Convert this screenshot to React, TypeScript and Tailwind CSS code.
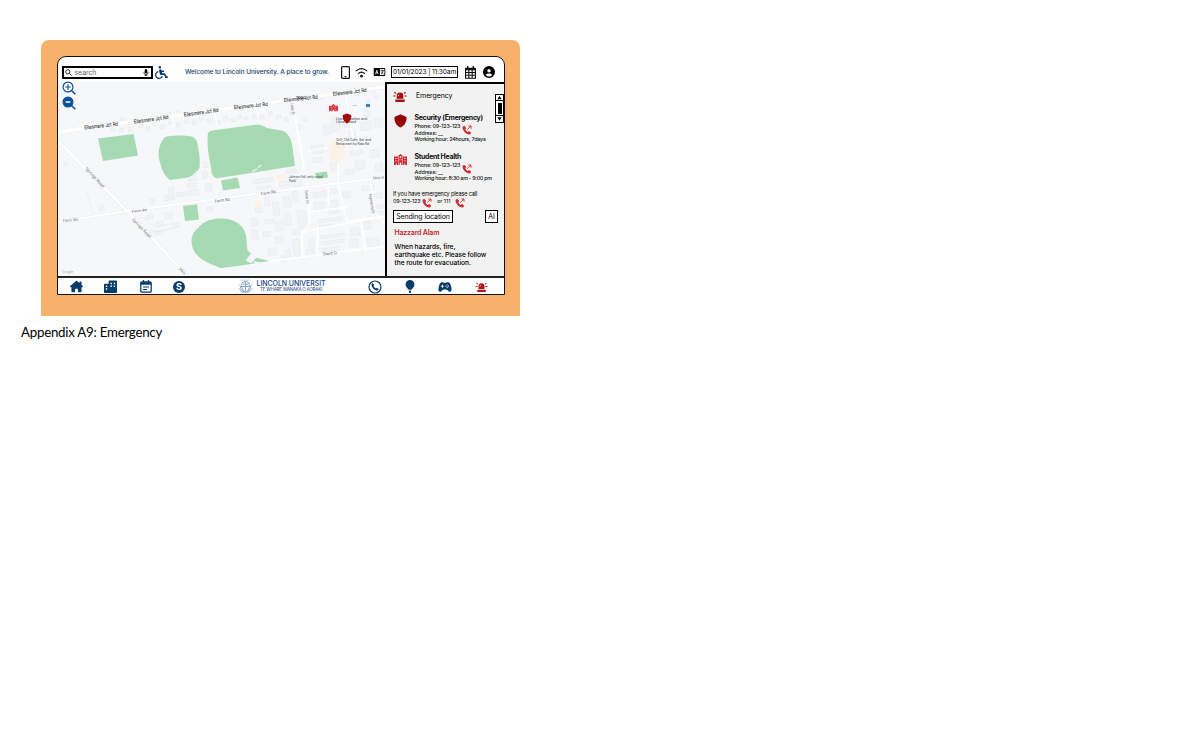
import type { ReactNode } from "react";
import { FaWheelchair, FaShield, FaHouseChimney, FaCircleUser } from "react-icons/fa6";
import { IoGameController } from "react-icons/io5";

function Siren({ className }: { className: string }) {
  return (
    <svg viewBox="0 0 24 20" className={className} fill="currentColor">
      <path d="M6 14V8.500a6 6 0 0 1 12 0V14z" />
      <path d="M3.500 15.500h17V20h-17z" />
      <path d="M11 6c-1.500.7-2.200 1.800-2.200 3.500" stroke="#fff" strokeWidth="1.200" fill="none" />
      <path d="M1.500 2l3.500 2.500M22.500 2l-3.500 2.500M0 9h4M24 9h-4" stroke="currentColor" strokeWidth="1.900" />
    </svg>
  );
}

function Hospital({ className }: { className: string }) {
  return (
    <svg viewBox="0 0 26 22" className={className} fill="currentColor">
      <path fillRule="evenodd" d="M9 3l4-3 4 3v19h-2.500v-5h-3v5H9zM12.300 4v1.500h-1.500V7h1.500v1.500h1.500V7h1.500V5.500h-1.500V4zM11 10.500v2h1.500v-2zm3 0v2h1.500v-2z" />
      <path fillRule="evenodd" d="M0 5h8v17H5.500v-3h-2v3H0zm2 3v2h1.500V8zm3 0v2h1.500V8zm-3 5v2h1.500v-2zm3 0v2h1.500v-2z" />
      <path fillRule="evenodd" d="M18 5h8v17h-3.500v-3h-2v3H18zm2 3v2h1.500V8zm3 0v2h1.500V8zm-3 5v2h1.500v-2zm3 0v2h1.500v-2z" />
    </svg>
  );
}

function CallOut() {
  return (
    <svg viewBox="0 0 20 20" className="size-[10px] shrink-0 text-[#d22a30]">
      <path fill="currentColor" d="M4.500 1.500 1 3.500C.5 11 8 19.500 16 19l2.500-3.500-4.500-3.500-2.500 1.800C9 12.500 7.500 10.500 6.800 8.300L8.500 6z" />
      <path d="M10.500 9 18 2M12.500 2H18v5.500" fill="none" stroke="currentColor" strokeWidth="1.800" />
    </svg>
  );
}

function Magnifier({ minus }: { minus?: boolean }) {
  return (
    <svg viewBox="0 0 14 14" className="block size-[14px]">
      <circle cx="6" cy="6" r="4.900" fill={minus ? "#0f529c" : "#fff"} stroke="#0f529c" strokeWidth="1.200" />
      <path d="M9.500 9.500 13.300 13.300" stroke="#0f529c" strokeWidth="1.600" />
      {minus ? (
        <path d="M3.700 6h4.600" stroke="#fff" strokeWidth="1.300" />
      ) : (
        <path d="M3.200 6h5.600M6 3.200v5.600" stroke="#0f529c" strokeWidth="1.200" />
      )}
    </svg>
  );
}

function Label({ x, y, r, w, size = 5, children }: { x: number; y: number; r: number; w: number; size?: number; children: string }) {
  return (
    <text x={x} y={y} fontSize={size} textLength={w} lengthAdjust="spacingAndGlyphs" transform={`rotate(${r} ${x} ${y})`}>
      {children}
    </text>
  );
}

const houses: [number, number][] = [
  [110, 128], [119, 129], [128, 127], [138, 125], [146, 127], [152, 123], [160, 125], [168, 122], [176, 123], [184, 120],
  [192, 121], [199, 118], [207, 119], [216, 121], [223, 117], [230, 119], [237, 115], [244, 117], [252, 115], [260, 116],
  [268, 112], [276, 116], [284, 118], [289, 112], [296, 125], [303, 118], [200, 112], [211, 109], [240, 106], [120, 118],
  [166, 113], [176, 111], [318, 96], [344, 92], [366, 100], [374, 96],
];

const blocks: [number, number, number, number][] = [
  [164, 196, 10, 5], [176, 193, 12, 4], [188, 176, 8, 5], [187, 184, 9, 4], [190, 190, 8, 6], [203, 162, 4, 6], [202, 172, 5, 7],
  [205, 184, 6, 8], [253, 180, 20, 4], [256, 187, 15, 3], [279, 182, 12, 5], [293, 180, 8, 7], [286, 170, 10, 4],
  [264, 198, 5, 8], [272, 202, 6, 14], [283, 197, 7, 11], [292, 192, 5, 10], [255, 208, 7, 5], [251, 219, 6, 7], [265, 220, 9, 4],
  [275, 222, 8, 9], [284, 214, 6, 12], [297, 211, 8, 18], [292, 230, 7, 5], [251, 230, 6, 10], [263, 232, 7, 5], [275, 237, 8, 7],
  [292, 240, 7, 18], [285, 250, 5, 8], [268, 249, 8, 7], [281, 256, 4, 6], [313, 193, 12, 5], [327, 190, 10, 4], [314, 203, 10, 9],
  [328, 201, 9, 13], [342, 192, 8, 7], [318, 220, 24, 3], [318, 226, 16, 3], [321, 236, 23, 3], [321, 242, 23, 3], [321, 249, 19, 3],
  [350, 228, 9, 8], [362, 222, 8, 8], [349, 240, 9, 8], [366, 239, 13, 8], [308, 240, 6, 7], [306, 250, 8, 7], [311, 146, 12, 8],
  [313, 158, 9, 5], [323, 126, 7, 9], [331, 118, 7, 14], [339, 123, 12, 4], [348, 131, 7, 8], [360, 123, 11, 8], [374, 119, 8, 9],
  [363, 108, 6, 9], [350, 151, 12, 5], [355, 161, 9, 9], [370, 150, 9, 8], [375, 164, 7, 8], [345, 170, 9, 5], [330, 163, 6, 8],
  [362, 187, 12, 4], [372, 194, 10, 5], [377, 205, 8, 4], [376, 212, 8, 4], [150, 199, 4, 5], [168, 188, 5, 10], [99, 206, 5, 5],
  [63, 163, 4, 3], [145, 216, 8, 4], [156, 222, 7, 5], [164, 213, 8, 6], [173, 224, 6, 4], [155, 231, 8, 4], [207, 207, 6, 4],
];

function CampusMap() {
  return (
    <svg viewBox="58 82 327 194" className="block h-full w-full bg-[#f6f7f9]" fontFamily="Inter, sans-serif">
      <g fill="#f1f2f4" stroke="#e6e8ea" strokeWidth=".5">
        {houses.map(([x, y], i) => (
          <rect key={i} x={x} y={y} width={i % 3 ? 4 : 5} height={i % 2 ? 3 : 4} transform={`rotate(-8 ${x} ${y})`} />
        ))}
        {blocks.map(([x, y, w, h], i) => (
          <rect key={i} x={x} y={y} width={w} height={h} transform={`rotate(-8 ${x} ${y})`} />
        ))}
      </g>
      <g fill="none" stroke="#e6e8ea" strokeWidth=".6">
        <path d="M139 215l16 12 20-4M140 227l18 5 14-3M86 190l8 27M144 234l35-7" />
      </g>
      <g fill="none" stroke="#e9ebed" strokeLinejoin="round">
        <path d="M58 132 386 86.500" strokeWidth="4.600" />
        <path d="M58 141 127 211 190 279" strokeWidth="3.500" />
        <path d="M58 222 127 211 386 177" strokeWidth="2.800" />
      </g>
      <g fill="none" stroke="#fff" strokeLinejoin="round">
        <path d="M58 132 386 86.500" strokeWidth="3.800" />
        <path d="M58 141 127 211 190 279" strokeWidth="2.500" />
        <path d="M58 222 127 211 386 177" strokeWidth="2" />
        <path d="M292 100 308 190 310 222 302 234 302 256" strokeWidth="1.800" />
        <path d="M345 92 355 150M338 164v19l9 39 36-6M328 187l1 20M310 212l37-5" strokeWidth="1.500" />
        <path d="M370 179l5 33 11 13M302 232l84-16M318 226l-1 29M349 222l12-3 5 34M250 264 386 246" strokeWidth="1.600" />
        <path d="M215 114l2 12M256 108l2 10M173 118v9M308 151l30-5 16-2" strokeWidth="1.200" />
      </g>
      <g fill="#a6dab3">
        <path d="m98 138.500 35.500-4.500 4.500 21.500-35 5.500z" />
        <path d="M165 137c8-2 22-2 28 0 4 2 5 7 5.500 13 1.500 5 1.500 15 1 18-3 5-9 9-14 10l-16 2c-5-5-8-10-9-16-3-8-3-19 4.500-27z" />
        <path d="M208 133q1-2 4-2.500l42-5.500c7-1 9 1 13 3l17 3c5 4 7 8 8 13l3 22-76 12q-5 1-7-4l-4-24q-1-11 0-17z" />
        <path d="m221 180.500 16.500-3 2.500 10.500-17 2.500zM315 173l12-1.500 1 6-11 1.500zM183 206l14-1.500 2 15-14 1.500z" />
        <path d="M198 228c6-8 16-9.500 23-9.500 14 0 23 7 25 17l1.500 15 8 7 14 3.500-28 4.500-21 2.500c-15-6-28-11-29-26 0-6 2-10 6.500-14z" />
      </g>
      <g fill="#fbf2e6">
        <ellipse cx="337" cy="151" rx="9" ry="11" />
        <ellipse cx="281" cy="177" rx="6" ry="3" />
        <ellipse cx="258" cy="204" rx="3" ry="4" />
      </g>
      <path d="m247 260 4-5 4 2.500-4 4.500z" fill="#f3f5f7" stroke="#f3f5f7" strokeWidth="2" strokeLinejoin="round" />
      <path d="M254 262q8 3 16 .5" stroke="#f6f7f9" strokeWidth="2" fill="none" />
      <path d="m252 172 5-3m1-1 3-3" stroke="#e4f0e6" strokeWidth="1.500" fill="none" />
      <g fill="#3c3f43" stroke="#3c3f43" strokeWidth=".12">
        <Label x={84.500} y={129.500} r={-7} w={34}>Ellesmere Jct Rd</Label>
        <Label x={134} y={123.500} r={-8} w={35}>Ellesmere Jct Rd</Label>
        <Label x={184} y={116.500} r={-8} w={35}>Ellesmere Jct Rd</Label>
        <Label x={234} y={109.200} r={-6} w={34}>Ellesmere Jct Rd</Label>
        <Label x={284} y={102} r={-6} w={34}>Ellesmere Jct Rd</Label>
        <Label x={333} y={95.800} r={-7} w={34}>Ellesmere Jct Rd</Label>
        <Label x={296} y={98.500} r={0} w={10} size={3.500}>1000</Label>
      </g>
      <g fill="#65686c">
        <Label x={85} y={169} r={47} w={26} size={4}>Springs Road</Label>
        <Label x={132} y={220} r={46} w={25} size={4}>Springs Road</Label>
        <Label x={63} y={222} r={-4} w={15} size={3.500}>Farm Rd</Label>
        <Label x={132} y={212.500} r={-6} w={15} size={3.500}>Farm Rd</Label>
        <Label x={215} y={202.500} r={-7} w={15} size={3.800}>Farm Rd</Label>
        <Label x={261} y={195} r={-8} w={15} size={3.800}>Farm Rd</Label>
        <Label x={373} y={179.500} r={-4} w={11} size={3.800}>Farm R</Label>
        <Label x={305} y={190} r={84} w={14} size={3.800}>Calder Dr</Label>
        <Label x={290.500} y={103} r={82} w={12} size={3.800}>Calder Dr</Label>
        <Label x={369} y={194} r={81} w={20} size={3.800}>Engineering Dr</Label>
        <Label x={323} y={255.500} r={-5} w={14} size={3.800}>Sheriff St</Label>
        <Label x={179} y={269} r={48} w={8} size={3.500}>Main</Label>
      </g>
      <text x="62" y="273" fontSize="3.300" fill="#a9abad">Google</text>
      <g fill="#393b3e">
        <Label x={336} y={120} r={0} w={31} size={3.600}>Lincoln Station and</Label>
        <Label x={336} y={123} r={0} w={20} size={3.600}>Library Road</Label>
        <Label x={336} y={141.300} r={0} w={35} size={3.600}>Grill, Old Cafe, Bar and</Label>
        <Label x={336} y={145.300} r={0} w={33} size={3.600}>Restaurant by Kaia Rd</Label>
        <Label x={289} y={178} r={0} w={34} size={3.600}>Johnson Hall, early school</Label>
        <Label x={289} y={181.500} r={0} w={7} size={3.600}>Park</Label>
      </g>
      <path d="M366 104h4v3h-4z" fill="#3e7fca" />
      <path d="M353 105h4v1h-4z" fill="#c5d3df" />
      <svg x="329" y="104" width="9" height="7.500" viewBox="0 0 26 22" fill="#dc2730">
        <path d="M9 3l4-3 4 3v19h-2.500v-5h-3v5H9zM0 5h8v17H5.500v-3h-2v3H0zM18 5h8v17h-3.500v-3h-2v3H18z" />
        <path d="M12.500 5h1v5h-1zM2 10h4v1H2zM20 10h4v1h-4z" fill="#fff" />
      </svg>
      <path d="m347 113.500 4.300 1.600c0 4-1 6.500-4.300 8.400-3.300-1.900-4.300-4.400-4.300-8.400z" fill="#a40b0e" />
    </svg>
  );
}

function Contact({ icon, title, hours, titleClass, hoursClass }: { icon: ReactNode; title: string; hours: string; titleClass: string; hoursClass: string }) {
  return (
    <div className="flex h-[39px] pl-[7px]">
      <div className="w-[20.500px] shrink-0">{icon}</div>
      <div className="whitespace-nowrap text-[5.400px] leading-[6.500px] font-medium text-[#111]">
        <div className={`h-[10px] text-[7px] leading-[10px] font-bold ${titleClass}`}>{title}</div>
        <div className="flex">
          <div className="w-[47.500px]">
            <div className="tracking-[-0.200px]">Phone: 09-123-123</div>
            <div className="tracking-[-0.100px]">Address: __</div>
          </div>
          <div className="pt-[2px]"><CallOut /></div>
        </div>
        <div className={hoursClass}>{hours}</div>
      </div>
    </div>
  );
}

function EmergencyPanel() {
  return (
    <aside className="flex w-[119px] shrink-0 border-t-2 border-l-2 border-black bg-[#f2f2f2] text-black">
      <div className="w-[108px] shrink-0">
        <div className="flex h-[29px] items-start pt-[6px] pl-[6px]">
          <Siren className="mt-[1px] h-[11px] w-[14px] text-[#a80f12]" />
          <span className="pl-[9px] text-[7px] leading-[12px] tracking-[-0.100px]">Emergency</span>
        </div>
        <Contact
          icon={<FaShield className="mt-[1px] h-[14px] w-[13px] text-[#980508]" />}
          title="Security (Emergency)"
          titleClass="tracking-[-0.320px]"
          hours="Working hour: 24hours, 7days"
          hoursClass="tracking-[-0.230px]"
        />
        <Contact
          icon={<Hospital className="mt-[2px] h-[11px] w-[13px] text-[#d0262b]" />}
          title="Student Health"
          titleClass="tracking-[-0.320px]"
          hours="Working hour: 8:30 am - 9:00 pm"
          hoursClass="tracking-[-0.280px]"
        />
        <div className="h-[18px] pl-[6px] text-[5.600px] leading-[7px] whitespace-nowrap">
          <div className="tracking-[-0.180px]">If you have emergency please call</div>
          <div className="flex text-[5.400px]">
            <span className="w-[29px] tracking-[-0.200px]">09-123-123</span>
            <CallOut />
            <span className="w-[23px] pl-[5px]">or 111</span>
            <CallOut />
          </div>
        </div>
        <div className="flex h-[18px] w-[111px] items-start justify-between pt-[1px] pl-[6px]">
          <div className="flex h-[13px] w-[60px] items-center justify-center border-[1.500px] border-black bg-white text-[7px] leading-none tracking-[-0.100px] whitespace-nowrap">Sending location</div>
          <div className="flex h-[13px] w-[13px] items-center justify-center border-[1.500px] border-black bg-white text-[7px] leading-none">AI</div>
        </div>
        <div className="h-[14.500px] pt-[1px] pl-[7.500px] text-[7px] leading-[10px] font-semibold tracking-[-0.200px] text-[#c4262b]">Hazzard Alam</div>
        <p className="pt-[1px] pl-[7.500px] text-[6.700px] leading-[8.300px] font-medium tracking-[-0.080px] whitespace-nowrap">
          When hazards, fire,<br />earthquake etc. Please follow<br />the route for evacuation.
        </p>
      </div>
      <div className="mt-[10px] flex h-[29px] w-[9px] shrink-0 flex-col items-center justify-between border border-black bg-white">
        <svg viewBox="0 0 8 6" className="h-[6px] w-[7px] border-b border-black"><path d="m1.500 5 2.500-4 2.500 4z" /></svg>
        <div className="h-[11px] w-[4px] bg-black" />
        <svg viewBox="0 0 8 6" className="h-[7px] w-[7px] border-t border-black"><path d="m1.500 1 2.500 4 2.500-4z" /></svg>
      </div>
    </aside>
  );
}

function TopBar() {
  return (
    <header className="flex h-[25px] shrink-0 items-center pt-[5px] pl-[4px]">
      <div className="flex h-[13px] w-[91px] items-center border-2 border-black bg-white pr-[2px] pl-[1px]">
        <svg viewBox="0 0 10 10" className="size-[7px]" fill="none" stroke="#111" strokeWidth="1.300"><circle cx="4" cy="4" r="3" /><path d="m6.200 6.200 3.300 3.300" /></svg>
        <span className="pl-[2.500px] text-[7px] leading-none tracking-[-0.100px] text-[#666]">search</span>
        <svg viewBox="0 0 8 10" className="ml-auto h-[7px] w-[6px]"><rect x="2.200" width="3.600" height="6.500" rx="1.800" /><path d="M1 4v1a3 3 0 0 0 6 0V4M4 8v2M2 9.500h4" fill="none" stroke="#000" /></svg>
      </div>
      <FaWheelchair className="ml-[2px] size-[13px] text-[#08386e]" />
      <span className="ml-[17px] w-[156px] pt-[1px] text-[6.400px] font-medium tracking-[-0.020px] whitespace-nowrap text-[#123c68]">Welcome to Lincoln University. A place to grow.</span>
      <svg viewBox="0 0 9 13" className="h-[13px] w-[9px]" fill="none" stroke="#111"><rect x=".6" y=".6" width="7.800" height="11.800" rx="1" strokeWidth="1.200" /><path d="M3.500 10.700h2" /></svg>
      <svg viewBox="0 0 14 12" className="ml-[5px] h-[11px] w-[13px]" fill="none" stroke="#111" strokeWidth="1.300"><path d="M.8 4.500q6.200-5.500 12.400 0M3.400 7.300q3.600-3.200 7.200 0" /><circle cx="7" cy="10" r=".9" fill="#111" /></svg>
      <svg viewBox="0 0 13 9" className="ml-[5px] h-[8px] w-[13px]"><rect width="13" height="9" rx="1" /><path d="M7 1.200h5v6.600H7z" fill="#fff" /><path d="m2 7 1.500-4.500L5 7M2.500 5.500h2" fill="none" stroke="#fff" strokeWidth=".9" /><path d="M7.800 3h3.400M9.500 2v1M8.300 6.500Q10.500 5.500 10.600 3M8.500 4.500l2.500 2" fill="none" stroke="#000" strokeWidth=".8" /></svg>
      <div className="ml-[5px] flex h-[12px] w-[67px] shrink-0 items-center justify-center border-[1.500px] border-black text-[6.600px] leading-none tracking-[-0.120px] whitespace-nowrap">01/01/2023 | 11:30am</div>
      <svg viewBox="0 0 13 14" className="ml-[6px] h-[13px] w-[13px]" fill="none" stroke="#111"><path d="M3.500 0v3M9.500 0v3" strokeWidth="1.500" /><path d="M.7 3.200h11.600" strokeWidth="2.800" /><path d="M1.200 3v10.200h10.600V3M4.700 4v9M8.300 4v9M1 7h11M1 10h11" strokeWidth="1.200" /></svg>
      <FaCircleUser className="ml-[6px] size-[12px]" />
    </header>
  );
}

function BottomBar() {
  return (
    <footer className="flex h-[18px] shrink-0 items-center border-t-2 border-[#222] bg-white pt-[1px] pl-[12px] text-[#0b3b68]">
      <FaHouseChimney className="size-[13px]" />
      <svg viewBox="0 0 14 14" className="ml-[21px] size-[13px]" fill="currentColor"><path fillRule="evenodd" d="M0 5q0-1 1-1h4V1.500Q5 .5 6 .5h7q1 0 1 1V13q0 1-1 1H1q-1 0-1-1zm2 1v1.500h1.500V6zm0 3v1.500h1.500V9zM7 3v1.500h1.500V3zm3.500 0v1.500H12V3zM7 6v1.500h1.500V6zm3.500 0v1.500H12V6z" /></svg>
      <svg viewBox="0 0 12 13" className="ml-[23px] h-[13px] w-[12px]" fill="none" stroke="currentColor" strokeWidth="1.300"><rect x=".8" y="2" width="10.400" height="10.200" rx="1" /><path d="M3.500 0v3M8.500 0v3" /><path d="M1 3.500h10" strokeWidth="2.500" /><path d="M3 7h6M3 9.500h4" strokeWidth="1.200" /></svg>
      <div className="ml-[21px] flex size-[12px] items-center justify-center rounded-full bg-[#0b3b68] text-[9px] leading-none font-bold text-white">S</div>
      <svg viewBox="0 0 16 16" className="ml-[53px] size-[15px]" fill="none" stroke="#7e97c4" strokeWidth=".9"><path d="M3 1.200h10" strokeDasharray="1 .7" /><path d="M4 4q4-3 8 0v5q-1 4-4 5-3-1-4-5zM4 8h8M8 3v10M1 6q2 1 2 4l3 4M15 6q-2 1-2 4l-3 4M1 10l3 4h8l3-4M5 5.500h6" /></svg>
      <div className="ml-[3px] w-[70px] text-center whitespace-nowrap text-[#174584]">
        <div className="text-[7px] leading-[6px] font-medium tracking-[-0.050px]">LINCOLN UNIVERSIT</div>
        <div className="text-[4.600px] leading-[5px] tracking-[-0.280px]">TE WHARE WANAKA O AORAKI</div>
      </div>
      <svg viewBox="0 0 14 14" className="ml-[42px] size-[14px]"><circle cx="7" cy="7" r="6" fill="none" stroke="currentColor" strokeWidth="1.200" /><path fill="currentColor" d="M4.800 3 3.400 4.200c.2 3.500 3 6.300 6.200 6.400L10.800 9.300 9 7.800l-1 .7Q6.200 7.600 5.500 6l.8-.9z" /></svg>
      <svg viewBox="0 0 10 14" className="ml-[23px] h-[13px] w-[10px]" fill="currentColor"><path d="M5 0a4.800 4.800 0 0 1 4.800 4.800C9.800 7.500 7 9.500 6.500 10.500h-3C3 9.500.2 7.500.2 4.800A4.800 4.800 0 0 1 5 0zM4 11.200h2V14H4z" /></svg>
      <IoGameController className="ml-[23px] size-[14px]" />
      <Siren className="ml-[23px] h-[10px] w-[13px] text-[#b31318]" />
    </footer>
  );
}

export default function App() {
  return (
    <main className="h-[750px] w-[1200px] overflow-hidden bg-white pt-[40px] font-['Inter',sans-serif]">
      <div className="ml-[41px] h-[276px] w-[479px] rounded-t-[8px] bg-[#f7b16b] pt-[16px] pl-[16px]">
        <div className="flex h-[239px] w-[448px] flex-col overflow-hidden rounded-t-[9px] border-[1.500px] border-[#111] bg-white">
          <TopBar />
          <div className="flex h-[194px] shrink-0">
            <div className="relative w-[327px] shrink-0">
              <CampusMap />
              <div className="absolute top-[-1px] left-[4px] flex flex-col gap-[1px]">
                <Magnifier />
                <Magnifier minus />
              </div>
            </div>
            <EmergencyPanel />
          </div>
          <BottomBar />
        </div>
      </div>
      <p className="mt-[7px] ml-[21px] w-[141px] font-['Lato','Noto_Sans',sans-serif] text-[13.300px] leading-[19px] tracking-[-0.250px] whitespace-nowrap text-black">Appendix A9: Emergency</p>
    </main>
  );
}
